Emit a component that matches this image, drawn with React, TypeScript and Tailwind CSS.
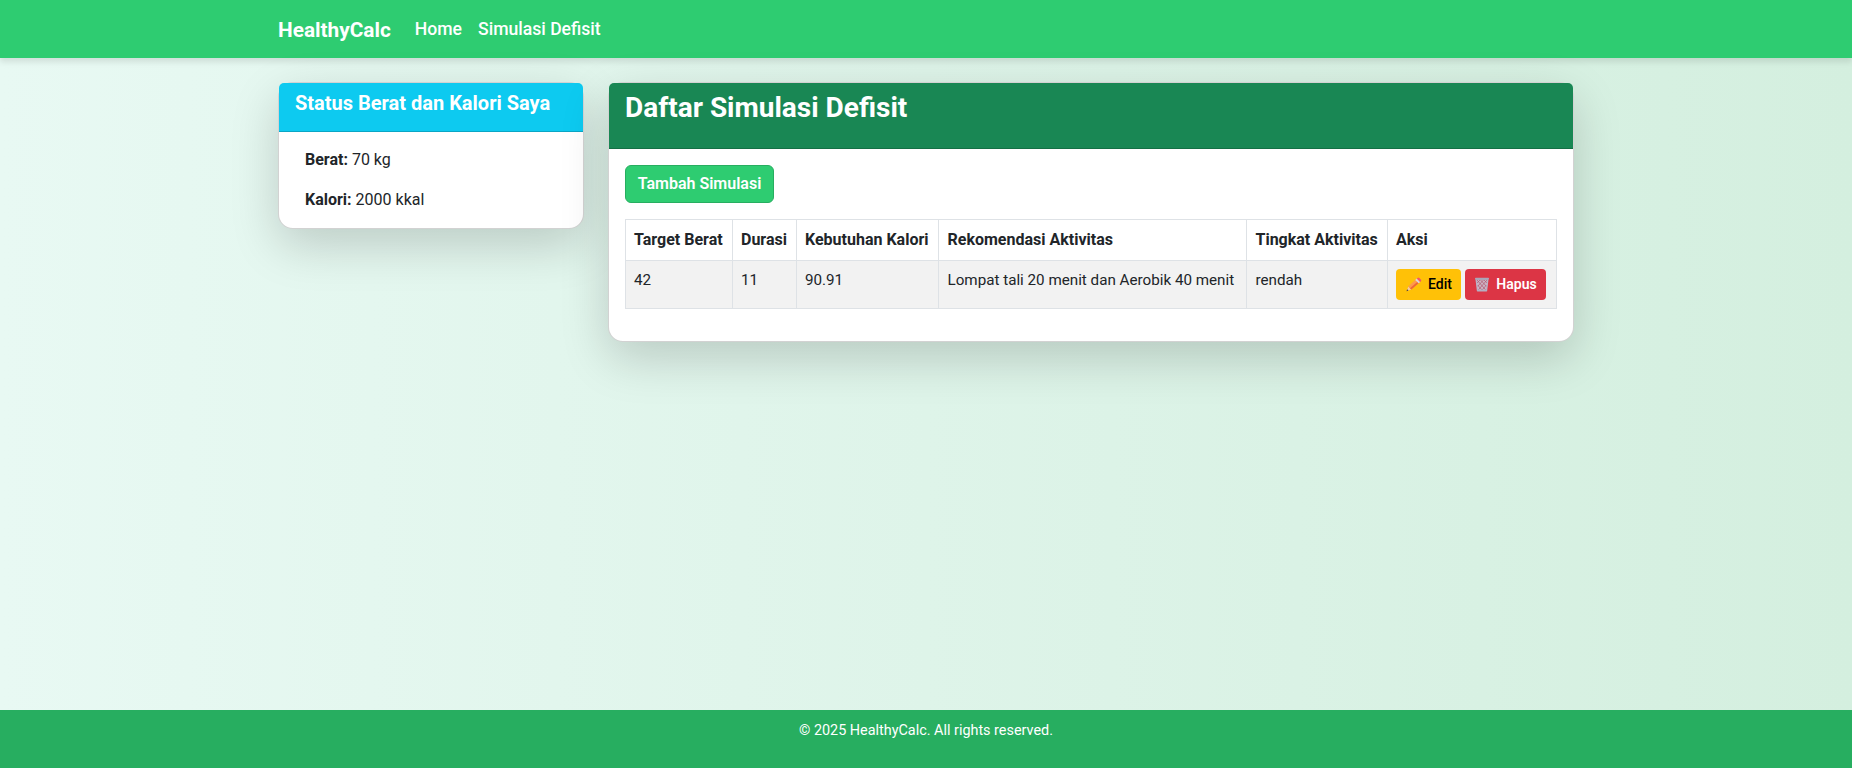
import React from 'react';

const PencilIcon = () => (
  <svg className="inline-block h-[15px] w-[17px] shrink-0" viewBox="0 0 17 15">
    <path d="M1.8 14 3.2 9.6 6.2 12.6Z" fill="#f3c9a5" />
    <path d="M1.5 14.3 2.2 12.2 3.5 13.5Z" fill="#4a3d3d" />
    <path d="M3.2 9.6 10.2 3 13.6 6.3 6.4 12.6Z" fill="#ff9a4c" />
    <path d="M5 11.3 12.2 4.9 13.6 6.3 6.4 12.6Z" fill="#ee6a35" />
    <path d="M10.2 3 11.8 1.6 15.2 4.9 13.6 6.3Z" fill="#dcd3e2" />
    <path d="M11.8 1.6 12.5.9Q13.4.2 14.3 1L15.8 2.4Q16.6 3.3 15.9 4.2L15.2 4.9Z" fill="#f4556a" />
  </svg>
);

const TrashIcon = () => (
  <svg className="inline-block h-[15px] w-[16px] shrink-0" viewBox="0 0 16 15">
    <path d="M2 2H14L12.6 13.6H3.4Z" fill="#cdb3c2" />
    <path d="M3 3 11.8 13M6.5 3 12.6 9.5M10 3 13 6M3.5 8 8 13M13 3 4.2 13M9.5 3 3.4 9.5M6 3 3 6M12.5 8 8 13" stroke="#b0566f" strokeWidth=".7" />
    <path d="M2.2 3 3.4 13M13.8 3 12.6 13" stroke="#b9b4c6" strokeWidth="1.3" />
    <rect x="1" y=".8" width="14" height="2.1" rx=".8" fill="#aaa5b8" />
    <rect x="2.8" y="12.4" width="10.4" height="2" rx=".7" fill="#b4afc2" />
  </svg>
);

const columns = ['Target Berat', 'Durasi', 'Kebutuhan Kalori', 'Rekomendasi Aktivitas', 'Tingkat Aktivitas', 'Aksi'];
const values = ['42', '11', '90.91', 'Lompat tali 20 menit dan Aerobik 40 menit', 'rendah'];

export default function App() {
  return (
    <div className="flex h-[768px] flex-col bg-linear-to-r/srgb from-[#e8f9f3] to-[#d4efdf] font-['Roboto',sans-serif] text-base text-[#212529]">
      <nav className="h-[58px] shrink-0 bg-[#2ecc71] text-white shadow-[0_4px_6px_rgba(0,0,0,0.1)]">
        <div className="mx-auto flex h-full w-[1320px] items-center px-3">
          <a className="mr-4 pt-0.5 text-[20.8px] font-bold leading-[30px]">HealthyCalc</a>
          <div className="flex text-[17.6px] font-medium leading-[26px]">
            <a className="px-2">Home</a>
            <a className="px-2">Simulasi Defisit</a>
          </div>
        </div>
      </nav>

      <main className="mx-auto mt-6 flex w-[1320px] flex-1 items-start gap-6 px-3">
        <section className="w-[306px] shrink-0 rounded-[15px] border border-black/[.176] bg-white shadow-[0_16px_48px_rgba(0,0,0,0.175)]">
          <div className="h-[49px] rounded-t-[5px] border-b border-black/[.176] bg-[#0dcaf0] px-4 pt-2">
            <h5 className="text-[20px] font-bold leading-6 text-white">Status Berat dan Kalori Saya</h5>
          </div>
          <div className="flex flex-col gap-4 px-[26px] py-4">
            <p><strong className="font-bold">Berat:</strong> 70 kg</p>
            <p><strong className="font-bold">Kalori:</strong> 2000 kkal</p>
          </div>
        </section>

        <section className="relative w-[966px] shrink-0 rounded-[15px] border border-black/[.176] bg-white shadow-[0_16px_48px_rgba(0,0,0,0.175)]">
          <div className="h-[66px] rounded-t-[5px] border-b border-black/[.176] bg-[#198754] px-4 pt-2">
            <h2 className="text-[28px] font-bold leading-[33.6px] text-white">Daftar Simulasi Defisit</h2>
          </div>
          <div className="px-4 pb-8 pt-4">
            <button className="block h-[38px] w-[149px] rounded-md border border-[#27ae60] bg-[#2ecc71] font-semibold leading-6 text-white">Tambah Simulasi</button>
            <table className="mt-4 w-[932px] table-fixed border-collapse text-left">
              <colgroup>
                <col className="w-[107px]" />
                <col className="w-[64px]" />
                <col className="w-[142px]" />
                <col className="w-[308px]" />
                <col className="w-[141px]" />
                <col className="w-[169px]" />
              </colgroup>
              <thead>
                <tr className="h-[41px]">
                  {columns.map((c) => (
                    <th key={c} className="whitespace-nowrap border border-[#dee2e6] p-2 font-bold leading-6 nth-4:pl-[8.5px] nth-5:pl-[8.5px]">{c}</th>
                  ))}
                </tr>
              </thead>
              <tbody>
                <tr className="h-[48px] bg-[#f2f2f2] text-[15.2px] leading-[23px]">
                  {values.map((v) => (
                    <td key={v} className="whitespace-nowrap border border-[#dee2e6] p-2 align-top nth-4:pl-[8.5px] nth-5:pl-[8.5px]">{v}</td>
                  ))}
                  <td className="border border-[#dee2e6] p-2 align-top">
                    <div className="flex gap-1 text-sm font-medium leading-[21px]">
                      <button className="flex h-[31px] w-[65px] items-center justify-center gap-1.5 rounded bg-[#ffc107] text-black"><PencilIcon />Edit</button>
                      <button className="flex h-[31px] w-[81px] items-center justify-center gap-1.5 rounded bg-[#dc3545] font-semibold text-white"><TrashIcon />Hapus</button>
                    </div>
                  </td>
                </tr>
              </tbody>
            </table>
          </div>
        </section>
      </main>

      <footer className="h-[58px] shrink-0 bg-[#27ae60] pt-[10px] text-center text-[14.4px] leading-[21px] text-white">
        © 2025 HealthyCalc. All rights reserved.
      </footer>
    </div>
  );
}
